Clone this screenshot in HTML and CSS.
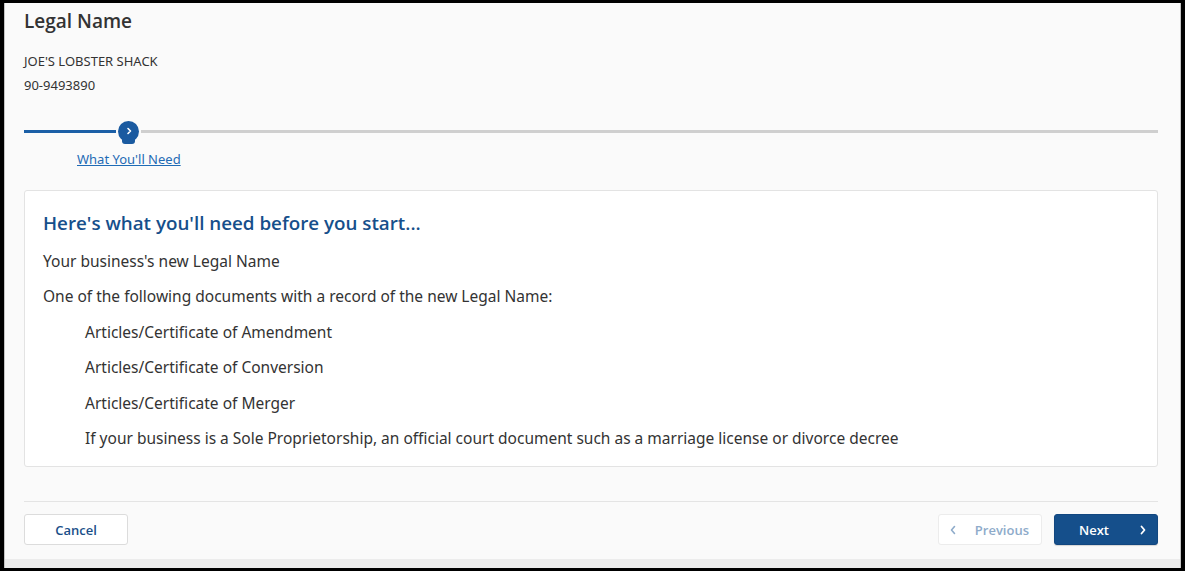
FILE: index.html
```html
<!DOCTYPE html>
<html lang="en">
<head>
<meta charset="utf-8">
<title>Legal Name</title>
<link rel="stylesheet" href="styles.css">
</head>
<body>
<div class="page">
  <main class="main">
    <h1 class="title">Legal Name</h1>
    <div class="entity">
      <div class="entity-line">JOE'S LOBSTER SHACK</div>
      <div class="entity-line">90-9493890</div>
    </div>

    <div class="stepper">
      <div class="track">
        <span class="track-done"></span>
        <span class="step-dot">
          <svg width="8" height="8" viewBox="0 0 8 8" aria-hidden="true"><path d="M3 1.5 L5.5 4 L3 6.5" fill="none" stroke="#fff" stroke-width="1.6" stroke-linecap="round" stroke-linejoin="round"/></svg>
        </span>
        <span class="track-rest"></span>
      </div>
      <div class="step-labels">
        <a class="step-link" href="#">What You'll Need</a>
      </div>
    </div>

    <section class="card">
      <h2 class="card-title">Here's what you'll need before you start...</h2>
      <p class="line">Your business's new Legal Name</p>
      <p class="line">One of the following documents with a record of the new Legal Name:</p>
      <p class="line indent">Articles/Certificate of Amendment</p>
      <p class="line indent">Articles/Certificate of Conversion</p>
      <p class="line indent">Articles/Certificate of Merger</p>
      <p class="line indent">If your business is a Sole Proprietorship, an official court document such as a marriage license or divorce decree</p>
    </section>

    <div class="actions">
      <button class="btn btn-cancel" type="button">Cancel</button>
      <div class="nav-btns">
        <button class="btn btn-prev" type="button" disabled>
          <svg class="chev" width="8" height="12" viewBox="0 0 8 12" aria-hidden="true"><path d="M5.5 2.5 L2.5 6 L5.5 9.5" fill="none" stroke="currentColor" stroke-width="1.6" stroke-linecap="round" stroke-linejoin="round"/></svg>
          <span>Previous</span>
        </button>
        <button class="btn btn-next" type="button">
          <span>Next</span>
          <svg class="chev" width="8" height="12" viewBox="0 0 8 12" aria-hidden="true"><path d="M2.5 2.5 L5.5 6 L2.5 9.5" fill="none" stroke="currentColor" stroke-width="1.8" stroke-linecap="round" stroke-linejoin="round"/></svg>
        </button>
      </div>
    </div>
  </main>
  <div class="band"></div>
</div>
</body>
</html>
```

FILE: styles.css
```css
html, body {
  margin: 0;
  padding: 0;
  height: 100%;
}

body {
  box-sizing: border-box;
  height: 571px;
  border-style: solid;
  border-color: #000;
  border-width: 3px 4px 3px 4px;
  background: #fafafa;
  font-family: "Noto Sans", "Open Sans", sans-serif;
  color: #333;
  overflow: hidden;
}

.page {
  height: 100%;
  display: flex;
  flex-direction: column;
  border-left: 1px solid #c4c4c4;
  border-right: 1px solid #c4c4c4;
  background: #fafafa;
}

.main {
  flex: 1;
  padding: 6px 22px 0 19px;
}

.title {
  margin: 0;
  font-family: "Open Sans", "Noto Sans", sans-serif;
  font-size: 19px;
  line-height: 24px;
  font-weight: 600;
  color: #333;
}

.entity {
  margin-top: 16px;
}

.entity-line {
  font-size: 13px;
  line-height: 24px;
  color: #333;
}

.stepper {
  margin-top: 23px;
}

.track {
  display: flex;
  align-items: center;
  height: 22px;
}

.track-done {
  width: 92px;
  height: 3px;
  background: #1b5fa6;
}

.step-dot {
  position: relative;
  width: 21px;
  height: 21px;
  margin: 0 2px;
  border-radius: 50%;
  background: #1a5aa0;
  display: flex;
  align-items: center;
  justify-content: center;
}

.step-dot::after {
  content: "";
  position: absolute;
  left: 4px;
  right: 4px;
  bottom: -2px;
  height: 5px;
  border-radius: 0 0 3px 3px;
  background: #1a5aa0;
}

.step-dot svg {
  position: relative;
  z-index: 1;
}

.track-rest {
  flex: 1;
  height: 3px;
  background: #cfcfcf;
}

.step-labels {
  margin-top: 5px;
  padding-left: 53px;
}

.step-link {
  font-size: 13px;
  line-height: 24px;
  color: #1f6bb5;
  text-decoration: underline;
}

.card {
  margin-top: 19px;
  background: #fff;
  border: 1px solid #e3e3e3;
  border-radius: 3px;
  padding: 18px 18px 16px 18px;
}

.card-title {
  margin: 0;
  font-family: "Open Sans", "Noto Sans", sans-serif;
  font-size: 18.8px;
  line-height: 28px;
  font-weight: 600;
  color: #164f8b;
}

.line {
  margin: 11.5px 0 0;
  font-size: 15.5px;
  line-height: 24px;
  color: #333;
}

.indent {
  padding-left: 42px;
}

.actions {
  margin-top: 34px;
  border-top: 1px solid #e4e4e4;
  padding-top: 12px;
  display: flex;
  justify-content: space-between;
  align-items: center;
}

.nav-btns {
  display: flex;
  gap: 12px;
}

.btn {
  box-sizing: border-box;
  width: 104px;
  height: 31px;
  border-radius: 3px;
  font-family: "Open Sans", "Noto Sans", sans-serif;
  font-size: 13px;
  font-weight: 600;
  cursor: pointer;
  display: flex;
  align-items: center;
}

.btn-cancel {
  justify-content: center;
  background: #fff;
  border: 1px solid #dcdcdc;
  color: #1a4f89;
}

.btn-prev {
  background: #fff;
  border: 1px solid #ececec;
  color: #8eabca;
  padding: 0 12px 0 10px;
  justify-content: space-between;
  cursor: default;
}

.btn-next {
  background: #154f8b;
  border: 1px solid #124780;
  color: #fff;
  padding: 0 10px 0 24px;
  justify-content: space-between;
  box-shadow: 0 1px 1px rgba(0, 0, 0, 0.15);
}

.chev {
  display: block;
}

.band {
  height: 9px;
  background: #ececec;
}
```
